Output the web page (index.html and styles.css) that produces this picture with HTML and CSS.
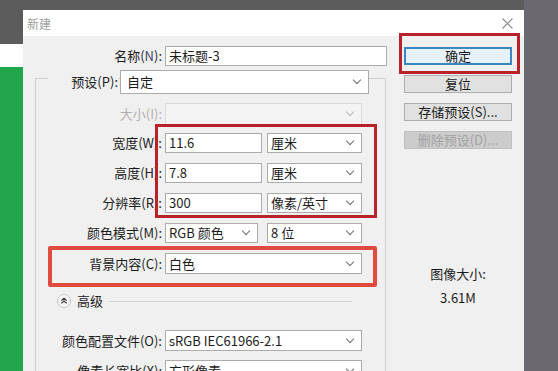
FILE: index.html
```html
<!DOCTYPE html>
<html lang="zh-CN">
<head>
    <meta charset="UTF-8">
    <meta name="viewport" content="width=device-width, initial-scale=1.0">
    <title>新建</title>
    <link rel="stylesheet" href="styles.css">
</head>
<body>

    <div class="strip">
        <div class="strip-white"></div>
        <div class="strip-green"></div>
    </div>

    <div class="dialog">
        <div class="titlebar">
            <span class="title">新建</span>
            <svg class="close" width="11" height="11" viewBox="0 0 11 11">
                <path d="M0.5 0.5L10.5 10.5M10.5 0.5L0.5 10.5" stroke="#8a8a8a" stroke-width="1.1" fill="none"/>
            </svg>
        </div>

        <div class="dialog-body">
            <div class="main">
                <div class="row name-row">
                    <span class="label">名称(<b>N</b>):</span>
                    <div class="field name-field">未标题-3</div>
                </div>

                <div class="group">
                    <div class="row preset-row">
                        <span class="label preset-label">预设(P):</span>
                        <div class="field select preset-select">自定</div>
                    </div>

                    <div class="row grow size-row">
                        <span class="label disabled-label">大小(I):</span>
                        <div class="field select disabled-field wide"></div>
                    </div>

                    <div class="row grow">
                        <span class="label">宽度(W):</span>
                        <div class="field half">11.6</div>
                        <div class="field select unit">厘米</div>
                    </div>

                    <div class="row grow">
                        <span class="label">高度(H):</span>
                        <div class="field half">7.8</div>
                        <div class="field select unit">厘米</div>
                    </div>

                    <div class="row grow">
                        <span class="label">分辨率(R):</span>
                        <div class="field half">300</div>
                        <div class="field select unit">像素/英寸</div>
                    </div>

                    <div class="row grow">
                        <span class="label">颜色模式(M):</span>
                        <div class="field select mode">RGB 颜色</div>
                        <div class="field select unit">8 位</div>
                    </div>

                    <div class="row grow bg-row">
                        <span class="label">背景内容(C):</span>
                        <div class="field select wide tall">白色</div>
                    </div>

                    <div class="row advanced">
                        <svg class="adv-icon" width="14" height="14" viewBox="0 0 14 14">
                            <circle cx="7" cy="7" r="6.5" fill="#f7f7f7" stroke="#c4c4c4"/>
                            <path d="M4.3 6.6L7 4.2L9.7 6.6M4.3 9.4L7 7L9.7 9.4" stroke="#333" stroke-width="1.2" fill="none"/>
                        </svg>
                        <span class="adv-text">高级</span>
                        <span class="adv-line"></span>
                    </div>

                    <div class="row grow profile-row">
                        <span class="label">颜色配置文件(O):</span>
                        <div class="field select wide tall">sRGB IEC61966-2.1</div>
                    </div>

                    <div class="row grow">
                        <span class="label">像素长宽比(X):</span>
                        <div class="field select wide tall">方形像素</div>
                    </div>
                </div>
            </div>

            <div class="actions">
                <button class="btn btn-default">确定</button>
                <button class="btn">复位</button>
                <button class="btn">存储预设(S)...</button>
                <button class="btn btn-disabled">删除预设(D)...</button>

                <div class="image-size">
                    <p>图像大小:</p>
                    <p class="size-value">3.61M</p>
                </div>
            </div>
        </div>

        <!-- annotations -->
        <div class="mark mark-dims"></div>
        <div class="mark mark-bg"></div>
        <div class="mark mark-ok"></div>
    </div>

    <div class="backdrop"></div>

</body>
</html>
```

FILE: styles.css
```css
* {
    box-sizing: border-box;
}

body {
    margin: 0;
    height: 371px;
    overflow: hidden;
    display: flex;
    background-color: #5c5c5c;
    color: #1c1c1c;
    font-family: "Noto Sans CJK SC", "Noto Sans", sans-serif;
    font-size: 13px;
}

.strip {
    width: 23px;
    flex-shrink: 0;
    display: flex;
    flex-direction: column;
    padding-top: 44px;
}

.strip-white {
    height: 23px;
    background-color: #fff;
}

.strip-green {
    flex: 1;
    background-color: #22a64b;
}

.dialog {
    width: 501px;
    height: 361px;
    flex-shrink: 0;
    margin-top: 10px;
    background-color: #f0f0f0;
    position: relative;
    overflow: hidden;
}

.titlebar {
    height: 26px;
    background-color: #fff;
    display: flex;
    align-items: center;
    padding: 0 11px 0 4px;
}

.title {
    color: #9d9d9d;
    font-size: 12px;
}

.close {
    margin-left: auto;
}

.dialog-body {
    display: flex;
}

.main {
    width: 370px;
    flex-shrink: 0;
    padding-top: 10px;
}

.backdrop {
    flex: 1;
    background-color: #6b696e;
}

/* rows */
.row {
    display: flex;
    align-items: center;
}

.label {
    text-align: right;
    white-space: nowrap;
    line-height: 20px;
    flex-shrink: 0;
}

.label b {
    font-weight: normal;
    color: #3b4a6b;
}

.field {
    height: 20px;
    background-color: #fff;
    border: 1px solid #ababab;
    padding: 0 3px;
    display: flex;
    align-items: center;
    line-height: 18px;
    white-space: nowrap;
    flex-shrink: 0;
}

.select::after {
    content: "";
    width: 5px;
    height: 5px;
    border-right: 1px solid #707070;
    border-bottom: 1px solid #707070;
    transform: translateY(-2px) rotate(45deg);
    margin-left: auto;
    margin-right: 5px;
}

.name-row .label {
    width: 139px;
}

.name-field {
    margin-left: 3px;
    width: 222px;
}

.group {
    margin: 12px 0 0 12px;
    width: 351px;
    height: 320px;
    border: 1px solid #d0d0d0;
}

.preset-row {
    margin-top: -9px;
    padding-left: 12px;
}

.preset-label {
    width: 70px;
    background-color: #f0f0f0;
}

.preset-select {
    margin-left: 2px;
    width: 249px;
    height: 24px;
    padding-left: 6px;
}

.grow {
    margin-top: 10px;
}

.grow .label {
    width: 126px;
    margin-right: 3px;
}

.size-row {
    margin-top: 9px;
}

.size-row + .grow {
    margin-top: 8px;
}

.disabled-label {
    color: #b0b0b0;
}

.disabled-field {
    height: 22px;
    background-color: #f4f4f4;
    border-color: #dadada;
}

.disabled-field::after {
    border-color: #b8b8b8;
}

.wide {
    width: 197px;
}

.tall {
    height: 21px;
}

.half {
    width: 97px;
}

.mode {
    width: 93px;
}

.unit {
    width: 95px;
    margin-left: 5px;
}

.mode + .unit {
    margin-left: 9px;
}

.advanced {
    margin-top: 19px;
    height: 16px;
}

.adv-icon {
    margin-left: 21px;
}

.adv-text {
    margin-left: 6px;
    line-height: 16px;
}

.adv-line {
    flex: 1;
    height: 1px;
    margin: 0 33px 0 6px;
    background-color: #d2d2d2;
}

.profile-row {
    margin-top: 21px;
}

.profile-row + .grow {
    margin-top: 9px;
}

/* right side */
.actions {
    flex: 1;
    padding: 11px 0 0 11px;
}

.btn {
    display: block;
    width: 108px;
    height: 18px;
    margin: 0 0 10px 0;
    padding: 0;
    background-color: #e1e1e1;
    border: 1px solid #adadad;
    color: #1c1c1c;
    font-family: inherit;
    font-size: 13px;
    line-height: 16px;
}

.btn-default {
    background-color: #e5f1fb;
    border: 2px solid #3a87c4;
    line-height: 14px;
}

.btn-disabled {
    background-color: #cccccc;
    border-color: #bfbfbf;
    color: #a3a3a3;
}

.image-size {
    width: 108px;
    margin-top: 117px;
    text-align: center;
}

.image-size p {
    margin: 0;
    line-height: 16px;
}

.image-size .size-value {
    margin-top: 8px;
}

/* red annotation boxes */
.mark {
    position: absolute;
    border-style: solid;
}

.mark-dims {
    left: 132px;
    top: 114px;
    width: 222px;
    height: 94px;
    border-width: 3px;
    border-color: #b8232b;
}

.mark-bg {
    left: 25px;
    top: 236px;
    width: 329px;
    height: 41px;
    border-width: 4px;
    border-color: #e04b3d;
    border-radius: 2px;
}

.mark-ok {
    left: 376px;
    top: 23px;
    width: 121px;
    height: 41px;
    border-width: 3px;
    border-color: #b8232b;
}
```
